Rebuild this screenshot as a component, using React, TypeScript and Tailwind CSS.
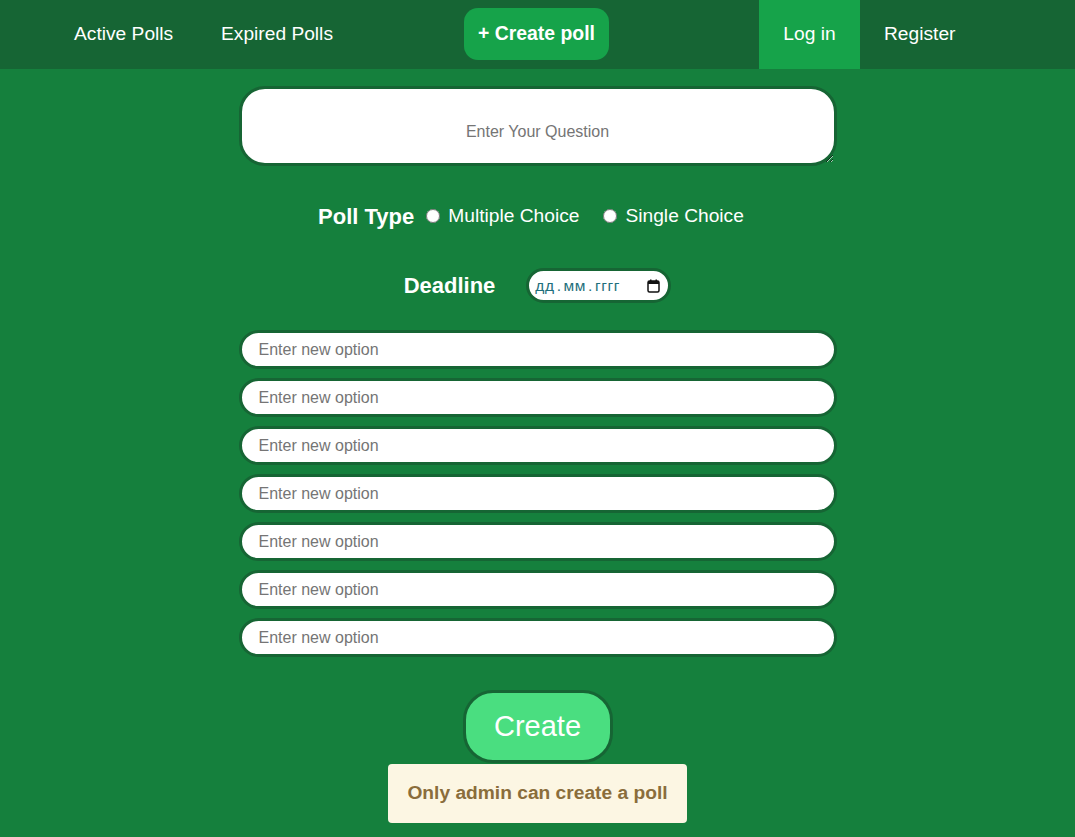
import React from "react";

export default function App() {
  const font = { fontFamily: '"Liberation Sans", Arial, sans-serif' };
  return (
    <div className="min-h-screen bg-[#15803d]" style={font}>
      <nav className="flex h-[69px] items-center bg-[#166534] pl-[50px] text-[19.2px] text-white">
        <a className="flex h-full w-[147px] items-center pl-[24px]">Active Polls</a>
        <a className="flex h-full w-[159px] items-center pl-[24px]">Expired Polls</a>
        <button className="ml-[108px] mb-[1px] h-[52px] w-[145px] rounded-[14px] bg-[#16a34a] text-[19.4px] font-bold text-white">
          + Create poll
        </button>
        <a className="ml-[150px] flex h-full w-[101px] items-center justify-center bg-[#16a34a]">Log in</a>
        <a className="flex h-full w-[120px] items-center pl-[24px]">Register</a>
      </nav>

      <main className="flex flex-col items-center">
        <textarea
          placeholder="Enter Your Question"
          className="mt-[17px] block h-[80px] w-[598px] rounded-[26px] border-[3px] border-[#166534] bg-white px-5 pt-[31px] text-center text-[16px] text-gray-800 outline-none placeholder:text-[#757575]"
        />

        <div className="mt-[34px] flex h-[32px] items-center pr-[13px] text-white">
          <span className="mr-[12px] text-[22px] font-bold">Poll Type</span>
          <input type="radio" name="t" className="m-0 h-[14px] w-[14px]" />
          <span className="ml-[8px] text-[19.2px]">Multiple Choice</span>
          <input type="radio" name="t" className="m-0 ml-[24px] h-[14px] w-[14px]" />
          <span className="ml-[8px] text-[19.2px]">Single Choice</span>
        </div>

        <div className="mt-[36px] flex h-[35px] items-center">
          <span className="mr-[31px] text-[22px] font-bold text-white">Deadline</span>
          <div className="flex h-[35px] w-[145px] items-center justify-between rounded-full border-[3px] border-[#166534] bg-white pl-[6px] pr-[8px]">
            <span className="flex items-center text-[15.5px] tracking-[0.6px] text-[#1f6f7c]">
              <span>дд</span>
              <span className="px-[2px]">.</span>
              <span>мм</span>
              <span className="px-[2px]">.</span>
              <span>гггг</span>
            </span>
            <svg width="13" height="14" viewBox="0 0 13 14">
              <rect x="1" y="2" width="11" height="11" rx="1.5" fill="none" stroke="#111" strokeWidth="1.5" />
              <rect x="1" y="2" width="11" height="3" fill="#111" />
              <rect x="3" y="0.5" width="1.5" height="2.5" fill="#111" />
              <rect x="8.5" y="0.5" width="1.5" height="2.5" fill="#111" />
            </svg>
          </div>
        </div>

        <div className="mt-[27px] flex flex-col gap-[9px]">
          {Array.from({ length: 7 }).map((_, i) => (
            <input
              key={i}
              placeholder="Enter new option"
              className="block h-[39px] w-[598px] rounded-full border-[3px] border-[#166534] bg-white px-[17px] text-[16px] text-gray-800 outline-none placeholder:text-[#757575]"
            />
          ))}
        </div>

        <button className="mt-[33px] h-[73px] w-[150px] rounded-[30px] border-[3px] border-[#166534] bg-[#4ade80] text-[29px] text-white">
          Create
        </button>

        <div className="mt-[1px] flex h-[59px] w-[299px] items-center justify-center rounded-[4px] bg-[#fcf6e3] text-[19.2px] font-bold text-[#8a6d3b]">
          Only admin can create a poll
        </div>
      </main>
    </div>
  );
}
